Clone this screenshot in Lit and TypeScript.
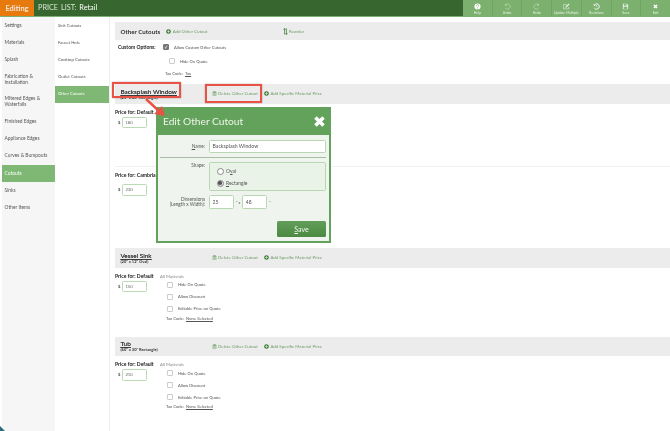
import { LitElement, html, css, svg } from "lit";
import { customElement } from "lit/decorators.js";

const MENU = [
  "Settings",
  "Materials",
  "Splash",
  "Fabrication & Installation",
  "Mitered Edges & Waterfalls",
  "Finished Edges",
  "Appliance Edges",
  "Curves & Bumpouts",
  "Cutouts",
  "Sinks",
  "Other Items",
];
const SUBMENU = ["Sink Cutouts", "Faucet Hole", "Cooktop Cutouts", "Outlet Cutouts", "Other Cutouts"];

const TOOLS = [
  { label: "Help", icon: svg`<circle cx="8" cy="8" r="7" fill="#fff"/><path d="M5.6 6.2a2.5 2.5 0 1 1 3.6 2.2c-.8.4-1.2.8-1.2 1.6" fill="none" stroke="#7bb06f" stroke-width="1.7"/><rect x="7.1" y="11" width="1.8" height="1.8" fill="#7bb06f"/>` },
  { label: "Undo", icon: svg`<path d="M4.2 3.6A6 6 0 1 1 3 11.5" fill="none" stroke="#d5e8d0" stroke-width="1.2"/><path d="M2.5 1.5v4h4z" fill="#d5e8d0"/>` },
  { label: "Redo", icon: svg`<path d="M11.8 3.6A6 6 0 1 0 13 11.5" fill="none" stroke="#d5e8d0" stroke-width="1.2"/><path d="M13.5 1.5v4h-4z" fill="#d5e8d0"/>` },
  { label: "Update Multiple", icon: svg`<path d="M13 9v4.5H1.5V3.5H9" fill="none" stroke="#e6f1e3" stroke-width="1.3"/><path d="M6 8l7-7 2 2-7 7-2.6.6z" fill="#e6f1e3"/>` },
  { label: "Revisions", icon: svg`<path d="M4 3.4A6.2 6.2 0 1 1 3 11.6" fill="none" stroke="#fff" stroke-width="2"/><path d="M1.5 1.5v4.5H6z" fill="#fff"/><path d="M8 4.5V8l2.4 1.5" fill="none" stroke="#fff" stroke-width="1.3"/>` },
  { label: "Save", icon: svg`<path d="M2 1.5h9.5l2.5 2.5v10.5H2z" fill="#e6f1e3"/><rect x="4.5" y="2.5" width="6" height="3.5" fill="#7bb06f"/><rect x="4" y="8.5" width="8" height="5" fill="#7bb06f"/>` },
  { label: "Exit", icon: svg`<path d="M3.2 5.4 5.4 3.2 8 5.8l2.6-2.6 2.2 2.2L10.2 8l2.6 2.6-2.2 2.2L8 10.2l-2.6 2.6-2.2-2.2L5.8 8z" fill="#fff"/>` },
];

const plusIcon = html`<svg class="ico" viewBox="0 0 16 16"><circle cx="8" cy="8" r="7.5" fill="#3f7d38"/><path d="M8 4v8M4 8h8" stroke="#dfeedd" stroke-width="2.4"/></svg>`;
const trashIcon = html`<svg class="ico" viewBox="0 0 16 16"><path d="M3 4h10v11H3zM6 1.5h4V4H6z" fill="none" stroke="#5d9a55" stroke-width="1.5"/><path d="M2 3.6h12M6 6.5v6M8 6.5v6M10 6.5v6" stroke="#5d9a55" stroke-width="1.1"/></svg>`;

@customElement("app-root")
export class AppRoot extends LitElement {
  static styles = css`
    :host {
      display: block;
      position: relative;
      width: 670px;
      height: 431px;
      overflow: hidden;
      background: #fff;
      font-family: Lato, "Open Sans", sans-serif;
      color: #555;
      font-size: 4.4px;
      filter: blur(0.3px);
    }
    .top {
      display: flex;
      height: 16px;
      background: #38662f;
      border-bottom: 1px solid #7bb06f;
    }
    .editing {
      width: 34px;
      background: #e8790c;
      color: #f6e7d6;
      font-size: 7.4px;
      font-weight: 700;
      display: flex;
      align-items: center;
      justify-content: center;
    }
    .title {
      flex: 1;
      padding-left: 4px;
      color: #d9e6d5;
      font-size: 7.3px;
      line-height: 16px;
      word-spacing: 1px;
    }
    .title b {
      font-weight: 400;
      color: #fff;
    }
    .tools {
      display: flex;
      width: 207px;
      background: #7bb06f;
    }
    .tool {
      flex: 1;
      display: flex;
      flex-direction: column;
      align-items: center;
      padding-top: 3px;
      border-right: 1px solid #6fa563;
      color: #e6f1e3;
      font-size: 3.5px;
      white-space: nowrap;
    }
    .tool:last-child {
      border-right: none;
    }
    .tool svg {
      width: 7px;
      height: 7px;
      margin-bottom: 1px;
    }
    .main {
      display: grid;
      grid-template-columns: 55px 55px 1fr;
      height: 414px;
    }
    .menu {
      margin-left: 2px;
      background: #f6f6f6;
      border-radius: 0 0 0 6px;
    }
    .item {
      height: 17.17px;
      display: flex;
      align-items: center;
      padding-left: 2.5px;
      font-size: 4.9px;
      line-height: 5.8px;
      color: #555;
    }
    .sub {
      border-right: 1px solid #eee;
    }
    .sub .item {
      padding-left: 3px;
      font-size: 4.2px;
    }
    .menu .item:nth-child(4),
    .menu .item:nth-child(5) {
      height: 22.5px;
    }
    .item.on {
      background: #7fb874;
      color: #fff;
    }
    .content {
      padding: 5px 0 0 5px;
    }
    .head {
      display: flex;
      align-items: center;
      height: 18px;
      padding-left: 5.5px;
      background: #ececec;
    }
    .head h2 {
      margin: 0;
      font-size: 6.2px;
      color: #333;
      white-space: nowrap;
    }
    .add {
      display: flex;
      align-items: center;
      gap: 1.5px;
      font-size: 4.4px;
      white-space: nowrap;
      color: #6c9c65;
    }
    .add-other {
      margin-left: 6px;
    }
    .reorder {
      margin-left: 75px;
    }
    .reorder .ico {
      height: 7px;
    }
    .ico {
      width: 5px;
      height: 5px;
      flex: none;
    }
    .options {
      height: 44px;
      display: grid;
      grid-template-columns: 45px 1fr;
      grid-template-rows: 14px 14px 11px;
      align-items: center;
      padding: 0 0 0 3px;
    }
    .options strong {
      font-size: 5px;
      color: #222;
      white-space: nowrap;
    }
    .check-row {
      display: flex;
      align-items: center;
      gap: 5px;
      height: 12px;
      font-size: 4.1px;
      white-space: nowrap;
    }
    .box {
      width: 6px;
      height: 6px;
      box-sizing: border-box;
      border: 0.5px solid #ccc;
      border-radius: 1px;
      background: #fff;
      flex: none;
    }
    .box.on {
      background: #777;
      border-color: #777;
      color: #fff;
      font-size: 5px;
      line-height: 5px;
      text-align: center;
    }
    .hide-row {
      grid-column: 2;
      padding-left: 6px;
    }
    .tax {
      font-size: 4.2px;
      white-space: nowrap;
    }
    .tax-top {
      grid-column: 2;
      margin-left: 2px;
    }
    .tax u {
      margin-left: 1px;
    }
    .sec-head {
      height: 19.5px;
      padding-left: 5.5px;
      background: #ececec;
      display: grid;
      grid-template-columns: 85px auto auto 1fr;
      align-items: center;
      column-gap: 6px;
    }
    .name {
      font-size: 6.4px;
      line-height: 7px;
      color: #3c3c3c;
      text-decoration: underline;
      text-shadow: 0 0 0.4px #444;
    }
    .size {
      font-size: 4px;
      line-height: 5px;
      font-weight: 700;
      color: #333;
      white-space: nowrap;
    }
    .price {
      display: grid;
      grid-template-columns: 45px 1fr;
      height: 69px;
      padding-top: 5px;
      box-sizing: border-box;
    }
    .price strong {
      font-size: 5.1px;
      color: #222;
      display: block;
      line-height: 6px;
      white-space: nowrap;
    }
    .money {
      display: flex;
      align-items: center;
      gap: 2px;
      padding-left: 3px;
      margin-top: 2px;
      font-size: 4.2px;
      font-weight: 700;
    }
    .input {
      width: 25px;
      height: 11.5px;
      box-sizing: border-box;
      border: 1px solid #bcd9b6;
      border-radius: 1.5px;
      padding-left: 2px;
      line-height: 9.5px;
      font-size: 4.2px;
      font-weight: 400;
      color: #666;
      background: #fff;
    }
    .all {
      font-style: italic;
      font-size: 4.6px;
      color: #888;
      line-height: 6px;
    }
    .flags {
      padding-left: 7px;
    }
    .flags .tax {
      margin: 0 0 0 -1px;
      line-height: 8px;
    }
    .default-block {
      height: 50.5px;
    }
    .divider {
      height: 12px;
      border-bottom: 1px solid #f1f1f1;
    }
    .cambria {
      height: 81px;
    }
    .cambria .money {
      margin-top: 6px;
    }
    .dialog {
      position: absolute;
      left: 156px;
      top: 107px;
      width: 175px;
      height: 136px;
      box-sizing: border-box;
      padding: 0 2px 2px;
      background: #63a25b;
      display: flex;
      flex-direction: column;
    }
    .dlg-title {
      height: 28px;
      display: flex;
      align-items: center;
      justify-content: space-between;
      padding: 0 3px 0 5px;
      color: #eef5ec;
      font-size: 10.2px;
    }
    .dlg-title svg {
      width: 13px;
      height: 13px;
    }
    .panel {
      flex: 1;
      background: #eff5ee;
      padding: 5px 3px 0 2px;
      display: grid;
      grid-template-columns: 49px 1fr;
      grid-template-rows: 13px 9px 29px 4px 14px 1fr;
      font-size: 4.7px;
      color: #555;
    }
    .lab {
      text-align: right;
      padding-right: 4px;
      line-height: 13px;
    }
    .lab.two {
      line-height: 5.5px;
      padding-top: 1.5px;
      white-space: nowrap;
    }
    .lab.shape {
      line-height: 7px;
    }
    .field {
      border: 0.7px solid #b9d6b2;
      border-radius: 1.5px;
      background: #fff;
      box-sizing: border-box;
      height: 13px;
      line-height: 11.5px;
      padding-left: 2.5px;
      font-size: 5.2px;
    }
    .sep {
      grid-column: 1 / 3;
      align-self: center;
      height: 1px;
      background: #a9bda5;
    }
    .group {
      border: 0.7px solid #b9d6b2;
      border-radius: 1.5px;
      box-sizing: border-box;
      padding: 2px 0 0 6.5px;
      background: #e9f3e7;
    }
    .radio {
      display: flex;
      align-items: center;
      gap: 2.5px;
      height: 12px;
      font-size: 5px;
    }
    .dot {
      width: 7px;
      height: 7px;
      box-sizing: border-box;
      border: 0.6px solid #888;
      border-radius: 50%;
      background: #fff;
      display: flex;
      align-items: center;
      justify-content: center;
    }
    .dot.on {
      background: #ddd;
    }
    .dot.on::after {
      content: "";
      width: 3.6px;
      height: 3.6px;
      border-radius: 50%;
      background: #555;
    }
    .dims {
      display: flex;
      gap: 2px;
      align-items: center;
      font-size: 3.8px;
    }
    .dims .field {
      width: 25px;
      height: 14px;
      line-height: 12.5px;
      font-size: 5px;
    }
    .actions {
      grid-column: 1 / 3;
      display: flex;
      justify-content: flex-end;
      padding-top: 12px;
    }
    .save {
      width: 49px;
      height: 16px;
      border-radius: 1.5px;
      background: linear-gradient(#629e59, #4b8a43);
      color: #f1f7ef;
      font-size: 7px;
      text-align: center;
      line-height: 16px;
    }
    .callout {
      position: absolute;
      box-sizing: border-box;
      border: 2px solid #ea5246;
      box-shadow: 0 0 1.5px rgba(0, 0, 0, 0.35);
    }
    .callout.name-box {
      left: 112px;
      top: 82px;
      width: 69px;
      height: 16px;
    }
    .callout.delete-box {
      left: 205px;
      top: 84px;
      width: 57px;
      height: 19px;
    }
    .arrow {
      position: absolute;
      left: 140px;
      top: 94px;
      width: 30px;
      height: 28px;
    }
    /* sliver of the desktop behind the window's rounded corner */
    .corner {
      position: absolute;
      left: 0;
      bottom: 0;
      width: 5px;
      height: 5px;
      background: #2c6b7c;
      clip-path: polygon(0 0, 100% 100%, 0 100%);
    }
  `;

  private _head(name: string, size: string) {
    return html`<div class="sec-head">
      <div><div class="name">${name}</div><div class="size">${size}</div></div>
      <div class="add">${trashIcon}Delete Other Cutout</div>
      <div class="add">${plusIcon}Add Specific Material Price</div>
    </div>`;
  }

  private _flags() {
    return html`<div class="flags">
      <div class="check-row"><span class="box"></span>Hide On Quote</div>
      <div class="check-row"><span class="box"></span>Allow Discount</div>
      <div class="check-row"><span class="box"></span>Editable Price on Quote</div>
      <div class="tax">Tax Code: <u>None Selected</u></div>
    </div>`;
  }

  private _price(value: string) {
    return html`<div class="price">
      <div>
        <strong>Price for: Default</strong>
        <div class="money">$ <span class="input">${value}</span></div>
      </div>
      <div><div class="all">All Materials</div>${this._flags()}</div>
    </div>`;
  }

  render() {
    return html`
      <div class="top">
        <div class="editing">Editing</div>
        <div class="title">PRICE LIST: <b>Retail</b></div>
        <div class="tools">
          ${TOOLS.map(
            (t) => html`<div class="tool"><svg viewBox="0 0 16 16">${t.icon}</svg>${t.label}</div>`
          )}
        </div>
      </div>
      <div class="main">
        <div class="menu">
          ${MENU.map((m) => html`<div class="item ${m === "Cutouts" ? "on" : ""}">${m}</div>`)}
        </div>
        <div class="sub">
          ${SUBMENU.map((m) => html`<div class="item ${m === "Other Cutouts" ? "on" : ""}">${m}</div>`)}
        </div>
        <div class="content">
          <div class="head">
            <h2>Other Cutouts</h2>
            <div class="add add-other">${plusIcon}Add Other Cutout</div>
            <div class="add reorder">
              <svg class="ico" viewBox="0 0 16 16" preserveAspectRatio="none"><path d="M5 1v14M2 4l3-3 3 3M11 15V1M8 12l3 3 3-3" fill="none" stroke="#3f7d38" stroke-width="2"/></svg>
              Reorder
            </div>
          </div>
          <div class="options">
            <strong>Custom Options:</strong>
            <div class="check-row"><span class="box on">✓</span>Allow Custom Other Cutouts</div>
            <div class="check-row hide-row"><span class="box"></span>Hide On Quote</div>
            <div class="tax tax-top">Tax Code: <u>Tax</u></div>
          </div>
          ${this._head("Backsplash Window", '(25" x 48" Rectangle)')}
          <div class="price default-block">
            <div>
              <strong>Price for: Default</strong>
              <div class="money">$ <span class="input">180</span></div>
            </div>
          </div>
          <div class="divider"></div>
          <div class="price cambria">
            <div>
              <strong>Price for: Cambria</strong>
              <div class="money">$ <span class="input">230</span></div>
            </div>
          </div>
          ${this._head("Vessel Sink", '(20" x 12" Oval)')} ${this._price("150")}
          ${this._head("Tub", '(60" x 30" Rectangle)')} ${this._price("210")}
        </div>
      </div>

      <div class="callout name-box"></div>
      <div class="callout delete-box"></div>

      <div class="dialog">
        <div class="dlg-title">
          Edit Other Cutout
          <svg viewBox="0 0 16 16"><path d="M1.5 4.6 4.6 1.5 8 4.9l3.4-3.4 3.1 3.1L11.1 8l3.4 3.4-3.1 3.1L8 11.1l-3.4 3.4-3.1-3.1L4.9 8z" fill="#fff"/></svg>
        </div>
        <div class="panel">
          <div class="lab"><u>N</u>ame:</div>
          <div class="field">Backsplash Window</div>
          <div class="sep"></div>
          <div class="lab shape">Shape:</div>
          <div class="group">
            <div class="radio"><span class="dot"></span><span>O<u>v</u>al</span></div>
            <div class="radio"><span class="dot on"></span><span><u>R</u>ectangle</span></div>
          </div>
          <div></div><div></div>
          <div class="lab two">Dimensions<br />(Length x Width):</div>
          <div class="dims">
            <span class="field">25</span>" x <span class="field">48</span>"
          </div>
          <div class="actions"><div class="save"><u>S</u>ave</div></div>
        </div>
      </div>

      <svg class="arrow" viewBox="0 0 30 28">
        <path d="M6 5 20 18" stroke="#ea5246" stroke-width="2.4" />
        <path d="M25 22 14 20 22 12z" fill="#ea5246" />
      </svg>
      <div class="corner"></div>
    `;
  }
}

declare global {
  interface HTMLElementTagNameMap {
    "app-root": AppRoot;
  }
}
